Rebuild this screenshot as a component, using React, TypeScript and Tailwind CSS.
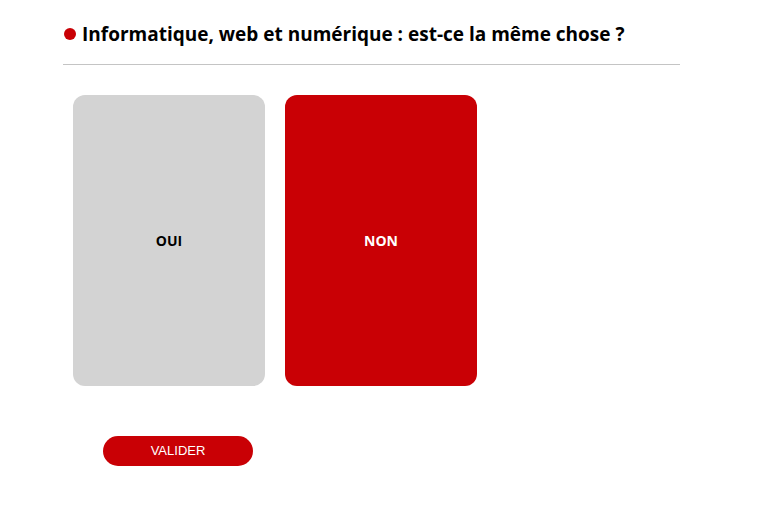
export default function App() {
  return (
    <div className="min-h-[516px] w-[762px] bg-white" style={{ fontFamily: "'Open Sans', Lato, sans-serif" }}>
      <div className="ml-[63px] w-[617px] pt-[20px]">
        <div className="flex items-center gap-[6px] pl-[1px]">
          <span className="h-[12px] w-[12px] rounded-full bg-[#c90005]" />
          <h1 className="text-[19px] font-bold leading-[28px] text-black">
            Informatique, web et numérique : est-ce la même chose ?
          </h1>
        </div>
        <div className="mt-[16px] h-px bg-[#c4c4c4]" />
        <div className="mt-[30px] flex gap-[20px] pl-[10px]">
          <button className="flex h-[291px] w-[192px] items-center justify-center rounded-[12px] bg-[#d3d3d3] text-[14px] font-bold text-black">
            OUI
          </button>
          <button className="flex h-[291px] w-[192px] items-center justify-center rounded-[12px] bg-[#c90005] text-[14px] font-bold text-white">
            NON
          </button>
        </div>
        <div className="mt-[50px] pl-[40px]">
          <button
            className="h-[30px] w-[150px] rounded-full bg-[#c90005] text-[13px] text-white"
            style={{ fontFamily: "'Liberation Sans', Arial, sans-serif" }}
          >
            VALIDER
          </button>
        </div>
      </div>
    </div>
  );
}
